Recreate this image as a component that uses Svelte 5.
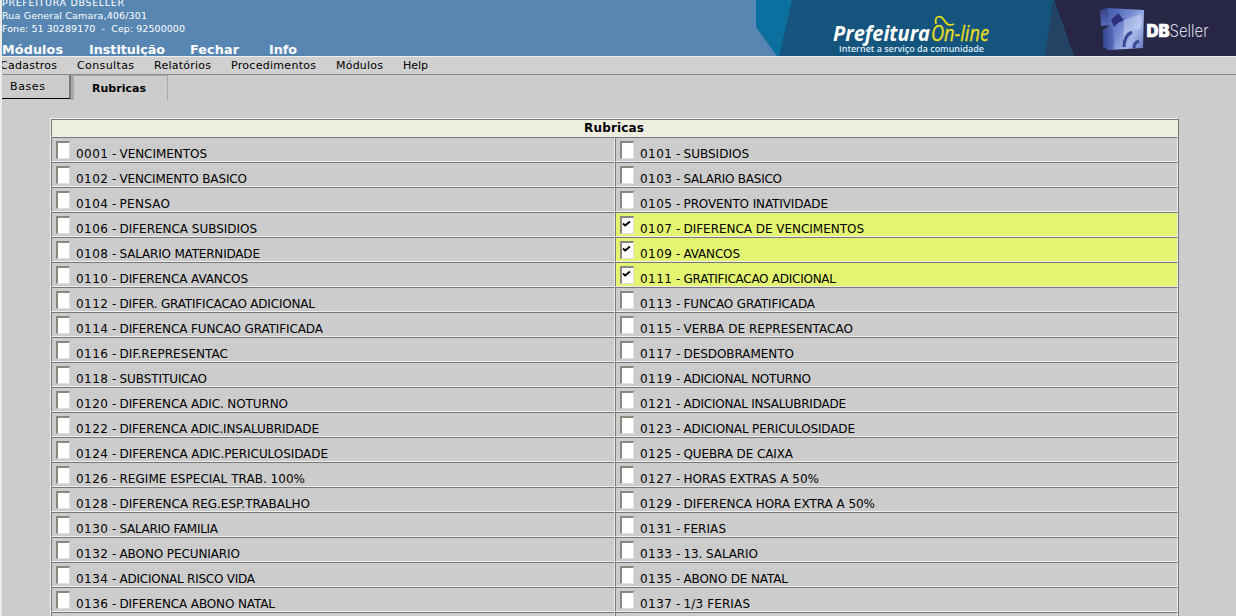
<script>
  const rows = [
    ['0001 - VENCIMENTOS', 207, '0101 - SUBSIDIOS', 749],
    ['0102 - VENCIMENTO BASICO', 247, '0103 - SALARIO BASICO', 782],
    ['0104 - PENSAO', 170, '0105 - PROVENTO INATIVIDADE', 828],
    ['0106 - DIFERENCA SUBSIDIOS', 257, '0107 - DIFERENCA DE VENCIMENTOS', 864, true],
    ['0108 - SALARIO MATERNIDADE', 260, '0109 - AVANCOS', 740, true],
    ['0110 - DIFERENCA AVANCOS', 248, '0111 - GRATIFICACAO ADICIONAL', 836, true],
    ['0112 - DIFER. GRATIFICACAO ADICIONAL', 315, '0113 - FUNCAO GRATIFICADA', 815],
    ['0114 - DIFERENCA FUNCAO GRATIFICADA', 323, '0115 - VERBA DE REPRESENTACAO', 853],
    ['0116 - DIF.REPRESENTAC', 228, '0117 - DESDOBRAMENTO', 794],
    ['0118 - SUBSTITUICAO', 207, '0119 - ADICIONAL NOTURNO', 811],
    ['0120 - DIFERENCA ADIC. NOTURNO', 288, '0121 - ADICIONAL INSALUBRIDADE', 846],
    ['0122 - DIFERENCA ADIC.INSALUBRIDADE', 319, '0123 - ADICIONAL PERICULOSIDADE', 855],
    ['0124 - DIFERENCA ADIC.PERICULOSIDADE', 328, '0125 - QUEBRA DE CAIXA', 793],
    ['0126 - REGIME ESPECIAL TRAB. 100%', 305, '0127 - HORAS EXTRAS A 50%', 819],
    ['0128 - DIFERENCA REG.ESP.TRABALHO', 310, '0129 - DIFERENCA HORA EXTRA A 50%', 875],
    ['0130 - SALARIO FAMILIA', 218, '0131 - FERIAS', 726],
    ['0132 - ABONO PECUNIARIO', 240, '0133 - 13. SALARIO', 758],
    ['0134 - ADICIONAL RISCO VIDA', 255, '0135 - ABONO DE NATAL', 788],
    ['0136 - DIFERENCA ABONO NATAL', 275, '0137 - 1/3 FERIAS', 750],
    ['', 0, '', 0]
  ];
  const cells = rows.flatMap(([a, aw, b, bw, on]) => [
    { text: a, width: aw - 76, on: false },
    { text: b, width: bw - 640, on }
  ]);
  const nav = [['Módulos', 61, 26], ['Instituição', 76, 25], ['Fechar', 49, 30], ['Info', 28, 0]];
  const menu = [['Cadastros', 57, 20], ['Consultas', 57, 20], ['Relatórios', 57, 20], ['Procedimentos', 85, 20], ['Módulos', 47, 20], ['Help', 25, 0]];
</script>

{#snippet label(text, width, cls)}
  <svg class="label {cls}" width={width} height="16"><text x="0" y="12" textLength={width}>{text}</text></svg>
{/snippet}

<div class="page">
  <header>
    <div class="info">
      <div class="address">
        {@render label('PREFEITURA DBSELLER', 122, 'small')}
        {@render label('Rua General Camara,406/301', 145, 'small')}
        {@render label('Fone: 51 30289170  -  Cep: 92500000', 183, 'small')}
      </div>
      <nav>
        {#each nav as [t, w, gap]}
          <span style="margin-right:{gap}px">{@render label(t, w, 'navtext')}</span>
        {/each}
      </nav>
    </div>
    <svg class="banner" width="480" height="56" viewBox="756 0 480 56">
      <defs>
        <linearGradient id="cube" x1="0" y1="0.2" x2="1" y2=".8">
          <stop offset="0" stop-color="#4055aa" /><stop offset=".45" stop-color="#7389d0" /><stop offset=".75" stop-color="#a5b7e8" /><stop offset="1" stop-color="#7186c8" />
        </linearGradient>
        <linearGradient id="side" x1="0" y1="0" x2="0" y2="1"><stop offset="0" stop-color="#34407f" /><stop offset="1" stop-color="#566dbb" /></linearGradient>
        <linearGradient id="stem"><stop offset="0" stop-color="#33458f" /><stop offset="1" stop-color="#5c71c2" /></linearGradient>
        <filter id="soft" x="-5%" y="-5%" width="110%" height="110%"><feGaussianBlur stdDeviation=".6" /></filter>
      </defs>
      <path fill="#14547d" d="M756 0h480v56H756z" />
      <path fill="#0b70a0" d="M756 0h36l-13 56h-2l-21-29z" />
      <path fill="#5786b3" d="M756 27l21 29h-21z" />
      <path fill="#234264" d="M1053 0l21 56h-29z" />
      <path fill="#272745" d="M1054 0h182v56h-162z" />
      <text class="brand" x="833" y="41" textLength="97" lengthAdjust="spacingAndGlyphs">Prefeitura</text>
      <text class="online" x="931" y="41" textLength="58" lengthAdjust="spacingAndGlyphs">On-line</text>
      <path d="M936 24c-2-9 5-9 8-4 3 5 5 6 10 4" fill="none" stroke="#e5df1d" stroke-width="1.8" />
      <text class="tagline" x="839" y="52" textLength="145" lengthAdjust="spacingAndGlyphs">Internet a serviço da comunidade</text>
      <g filter="url(#soft)">
        <path fill="url(#side)" d="M1100 10l8-2 3 17-10 1z" />
        <path fill="url(#cube)" d="M1107 8l37 2-1 38-34 2-6-4 1-16 6-5z" />
        <path fill="url(#stem)" d="M1103 30l7-5c6 3 4 13 4 25l-6 0-5-3z" />
        <path fill="#2d307c" d="M1111 20l7-7 6 7-6 3-4 4z" />
        <path fill="#dbe5fb" opacity=".4" d="M1124 20l17-6v14c-8 1-14 7-18 18z" />
        <path d="M1124 47c0-8 3-13 8-15M1134 48c0-4 2-6 5-7" fill="none" stroke="#394895" stroke-width="3" />
      </g>
      <text class="db" x="1146.5" y="37" textLength="23" lengthAdjust="spacingAndGlyphs">DB</text>
      <text class="seller" x="1169.5" y="37" textLength="39" lengthAdjust="spacingAndGlyphs">Seller</text>
    </svg>
  </header>
  <div class="menu">
    {#each menu as [t, w, gap]}
      <span style="margin-right:{gap}px">{@render label(t, w, 'menutext')}</span>
    {/each}
  </div>
  <div class="tabs">
    <div class="tab">{@render label('Bases', 35, 'menutext')}</div>
    <div class="tab active">{@render label('Rubricas', 54, 'tabtext')}</div>
  </div>
  <main>
    <div class="title">{@render label('Rubricas', 60, 'heading')}</div>
    <div class="grid">
      {#each cells as c}
        <div class="cell" class:on={c.on}>
          <div class="box">
            {#if c.on}<svg width="10" height="14"><path d="M1 5.5l2.2 2L8 3.5" fill="none" stroke="#000" stroke-width="1.8" /></svg>{/if}
          </div>
          {#if c.text}
            <svg class="label item" width={c.width} height="16"><text y="12"><tspan x="0" textLength="32">{c.text.slice(0, 4)}</tspan><tspan x="36">-</tspan><tspan x="43.5" textLength={c.width - 43.5}>{c.text.slice(7)}</tspan></text></svg>
          {/if}
        </div>
      {/each}
    </div>
  </main>
</div>

<style>
  :global(body) { margin: 0; overflow: hidden; background: #ccc; }
  .page { box-sizing: border-box; width: 1236px; height: 616px; overflow: hidden; border-left: 2px solid #efebe7; background: #ccc; font-family: 'DejaVu Sans', sans-serif; }
  .label { display: block; overflow: visible; white-space: pre; flex: none; }
  .label text { white-space: pre; }
  .small { font-size: 9.5px; fill: #fff; }
  .navtext { font-size: 12.7px; font-weight: bold; fill: #fff; }
  .menutext { font-size: 11px; }
  .tabtext { font-size: 11px; font-weight: bold; }
  .heading { font-size: 12px; font-weight: bold; }
  .item { font-size: 12px; }
  header { display: flex; justify-content: space-between; height: 56px; background: #5786b3; overflow: hidden; }
  .address { margin-top: -6px; height: 48px; }
  .address :global(svg) { height: 13px; }
  nav { display: flex; }
  .banner { display: block; }
  .brand { font: italic bold 22px 'Open Sans', sans-serif; fill: #fff; }
  .online { font: italic 22px 'Open Sans', sans-serif; fill: #e5df1d; stroke: #e5df1d; stroke-width: .3px; }
  .tagline { font: 600 9.5px 'Open Sans', sans-serif; fill: #dcebf3; }
  .db { font: 900 17px 'Inter', sans-serif; fill: #fff; stroke: #fff; stroke-width: .6px; }
  .seller { font: 300 17px 'Inter', sans-serif; fill: #d5d5e0; }
  .menu { box-sizing: border-box; display: flex; height: 19px; border-top: 1px solid #eee; border-bottom: 1px solid #888; background: #d0d0d0; }
  .menu span:first-child { margin-left: -2px; }
  .tabs { display: flex; height: 25px; }
  .tab { box-sizing: border-box; width: 69px; height: 24px; padding: 3px 0 0 8px; border-right: 2px solid #777; border-bottom: 1px solid #000; }
  .tab.active { width: 97px; height: 25px; padding: 4px 0 0 18px; border: solid #aaa; border-width: 1px 1px 0 3px; }
  main { box-sizing: border-box; width: 1129px; margin: 18px 0 0 48px; border: 1px solid #eee; border-right-color: #777; }
  .title { box-sizing: border-box; display: flex; justify-content: center; height: 18px; padding-right: 2px; border: 1px solid #777; border-right: 0; border-bottom-color: #eee; background: #eeeee0; }
  .grid { display: grid; grid-template-columns: 564px 563px; }
  .cell { box-sizing: border-box; display: flex; height: 25px; padding: 3px 0 0 4px; border: 1px solid; border-color: #777 #eee #eee #777; }
  .cell.on { background: #e4f470; }
  .box { box-sizing: border-box; width: 14px; height: 18px; margin-right: 6px; border: 2px solid; border-color: #88887f #e0e0dc #e0e0dc #88887f; border-right-width: 1px; border-bottom-width: 1px; background: #fff; }
  .box svg { display: block; }
  .cell :global(.item) { margin-top: 5px; }
</style>
